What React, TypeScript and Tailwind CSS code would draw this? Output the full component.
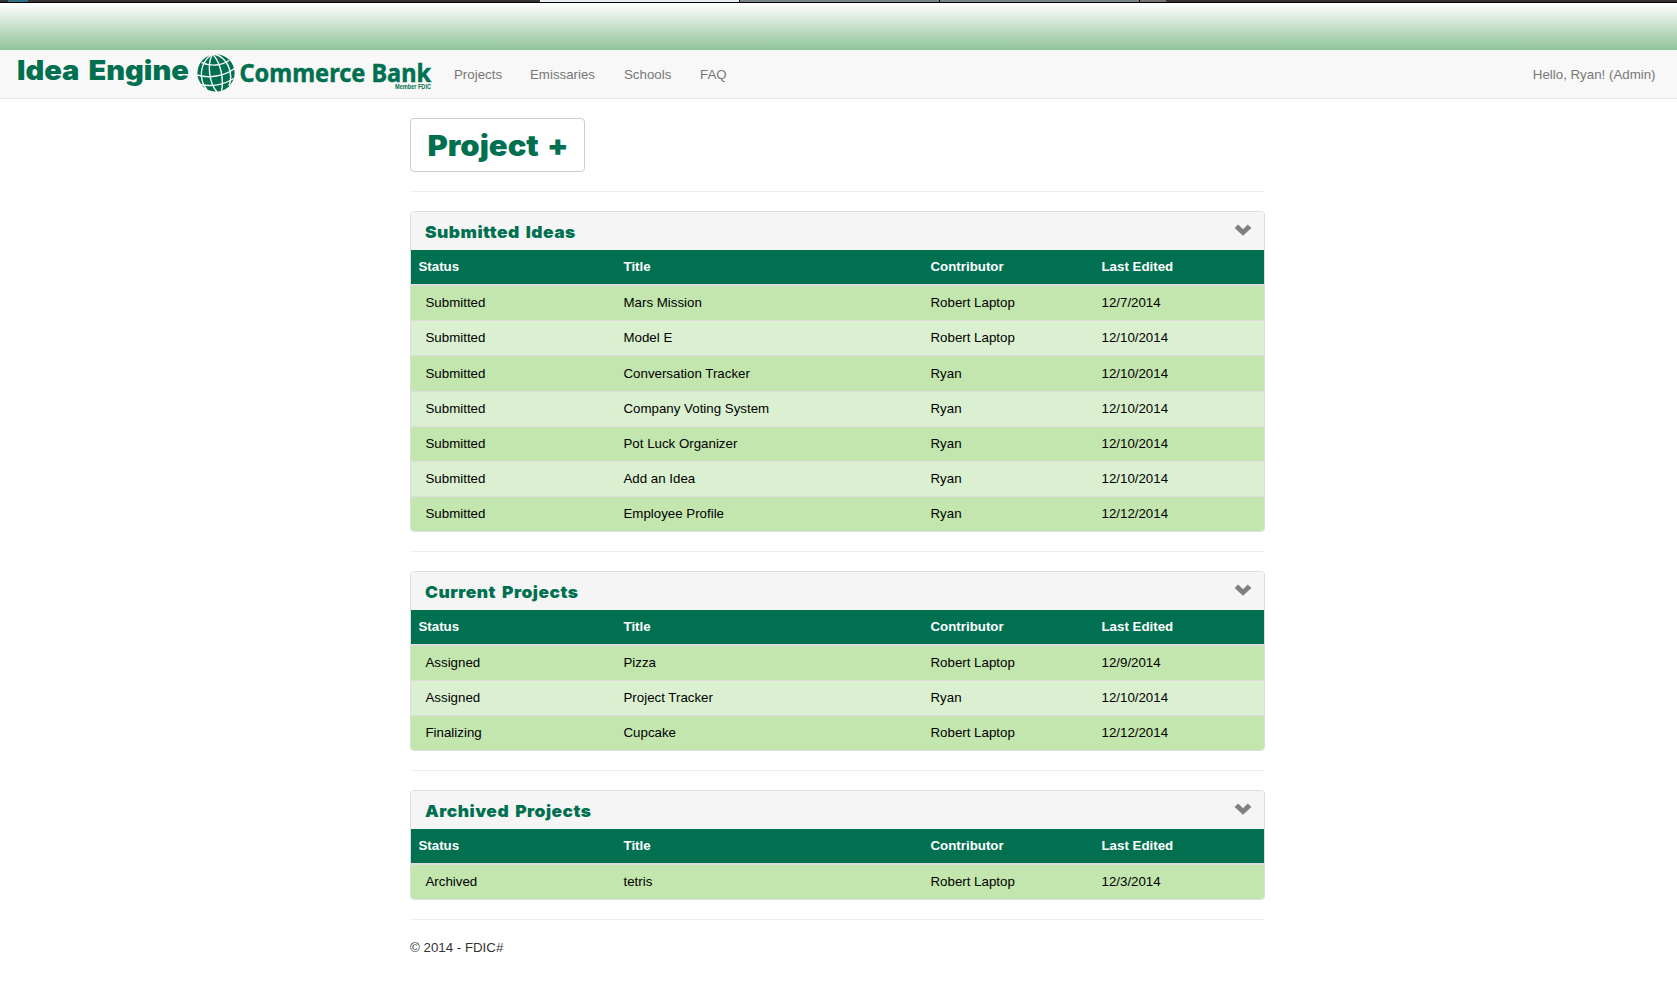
import React from "react";

type Row = [string, string, string, string];

const submitted: Row[] = [
  ["Submitted", "Mars Mission", "Robert Laptop", "12/7/2014"],
  ["Submitted", "Model E", "Robert Laptop", "12/10/2014"],
  ["Submitted", "Conversation Tracker", "Ryan", "12/10/2014"],
  ["Submitted", "Company Voting System", "Ryan", "12/10/2014"],
  ["Submitted", "Pot Luck Organizer", "Ryan", "12/10/2014"],
  ["Submitted", "Add an Idea", "Ryan", "12/10/2014"],
  ["Submitted", "Employee Profile", "Ryan", "12/12/2014"],
];
const current: Row[] = [
  ["Assigned", "Pizza", "Robert Laptop", "12/9/2014"],
  ["Assigned", "Project Tracker", "Ryan", "12/10/2014"],
  ["Finalizing", "Cupcake", "Robert Laptop", "12/12/2014"],
];
const archived: Row[] = [["Archived", "tetris", "Robert Laptop", "12/3/2014"]];

const columns = "grid grid-cols-[205px_307px_171px_1fr]";

function Chevron() {
  return (
    <svg className="mt-[12px] mr-[12.5px] h-[12px] w-[18px]" viewBox="0 0 18 12">
      <path d="M4.2 0.6 L9 5.2 L13.8 0.6 L17.4 4 L9 11.8 L0.6 4 Z" fill="#808080" />
    </svg>
  );
}

function Panel({ title, rows }: { title: string; rows: Row[] }) {
  return (
    <section className="overflow-hidden rounded border border-[#ddd]">
      <div className="flex h-[38px] justify-between bg-[#f5f5f5]">
        <h3 className="mt-[8px] ml-[14px] origin-left scale-x-[1.055] font-['Inter'] text-[16.5px] leading-[25px] font-black tracking-[0.45px] text-[#007050] [word-spacing:2px]">
          {title}
        </h3>
        <Chevron />
      </div>
      <div className={`${columns} h-[34px] bg-[#007050] text-[13.3px] leading-[33px] font-bold text-white`}>
        <span className="pl-[7.5px]">Status</span>
        <span className="pl-[7.5px]">Title</span>
        <span className="pl-[7.5px]">Contributor</span>
        <span className="pl-[7.5px]">Last Edited</span>
      </div>
      <div className="border-t border-[#ddd]">
        {rows.map((r, i) => (
          <div
            key={i}
            className={`${columns} ${
              rows.length > 3 && i === 2 ? "h-[36px] leading-[35px]" : "h-[35px] leading-[33px]"
            } border-t border-[#ddd] text-[13.3px] text-black odd:bg-[#c3e6ae] even:bg-[#daf0d0]`}
          >
            <span className="pl-[14.5px]">{r[0]}</span>
            <span className="pl-[7.5px]">{r[1]}</span>
            <span className="pl-[7.5px]">{r[2]}</span>
            <span className="pl-[7.5px]">{r[3]}</span>
          </div>
        ))}
      </div>
    </section>
  );
}

function Globe() {
  return (
    <svg className="h-[38px] w-[38px]" viewBox="0 0 38 38">
      <circle cx="19" cy="19" r="18.6" fill="#007050" />
      <g fill="none" stroke="#f8f8f8" strokeWidth="1.4">
        <path d="M15.5 0 C24 9 27 25 24.5 38" />
        <path d="M15.5 0 C10 10 12 29 20 38" />
        <path d="M14 1 C3 9 1 25 10 36" />
        <path d="M17 0 C30 3 37 18 32 32" />
        <path d="M4.5 8.5 C13 12.5 24 12 32 6.5" />
        <path d="M0 21 C12 24.5 27 22.5 37.5 14.5" />
        <path d="M3.5 30.5 C14 33 27 31 36.5 24.5" />
      </g>
    </svg>
  );
}

export default function App() {
  return (
    <div className="flex h-[985px] flex-col overflow-hidden bg-white font-['Liberation_Sans',Arial,sans-serif]">
      <div className="flex h-[2px] shrink-0 bg-[#353234]">
        <div className="w-[8px]" />
        <div className="w-[20px] bg-[#2d6f87]" />
        <div className="w-[512px]" />
        <div className="w-[199px] bg-[#e8eef0]" />
        <div className="w-[1px] bg-black" />
        <div className="w-[199px] bg-[#788487]" />
        <div className="w-[1px] bg-black" />
        <div className="w-[199px] bg-[#788487]" />
        <div className="w-[1px] bg-black" />
        <div className="w-[26px] bg-[#77716f]" />
      </div>
      <div className="h-[1px] shrink-0 bg-black" />
      <div className="h-[47px] shrink-0 bg-linear-to-b from-white to-[#8fc39a]" />
      <nav className="flex h-[49px] shrink-0 border-b border-[#e7e7e7] bg-[#f8f8f8] text-[13.3px] leading-[49px] text-[#777]">
        <div className="w-[180px] pl-[17px]">
          <div className="origin-left scale-x-[1.075] font-['Inter'] text-[27px] leading-[42px] font-black whitespace-nowrap text-[#007050] [word-spacing:3px]">
            Idea Engine
          </div>
        </div>
        <div className="flex w-[274px] pt-[4px] pl-[17px]">
          <Globe />
          <svg className="h-[42px] w-[204px] overflow-visible" viewBox="0 0 204 42">
            <text x="4.5" y="28" fontFamily="Noto Sans" fontWeight="700" fontSize="25.5" textLength="191.5" lengthAdjust="spacingAndGlyphs" fill="#007050" stroke="#007050" strokeWidth="0.5">
              Commerce Bank
            </text>
            <text x="160" y="35" fontFamily="Liberation Sans" fontWeight="700" fontSize="6.5" textLength="36" lengthAdjust="spacingAndGlyphs" fill="#007050">
              Member FDIC
            </text>
          </svg>
        </div>
        <a className="w-[76px]">Projects</a>
        <a className="w-[94px]">Emissaries</a>
        <a className="w-[76px]">Schools</a>
        <a>FAQ</a>
        <span className="mr-[21.5px] ml-auto">Hello, Ryan! (Admin)</span>
      </nav>
      <main className="ml-[410px] flex w-[855px] flex-col pt-[19px]">
        <button className="h-[54px] w-[175px] rounded border border-[#ccc] bg-white leading-[53px] whitespace-nowrap text-[#007050]">
          <span className="inline-block scale-x-[1.07] pl-px font-['Inter'] text-[29px] font-black [word-spacing:2px]">
            Project +
          </span>
        </button>
        <hr className="my-[19px] border-[#eee]" />
        <Panel title="Submitted Ideas" rows={submitted} />
        <hr className="my-[19px] border-[#eee]" />
        <Panel title="Current Projects" rows={current} />
        <hr className="my-[19px] border-[#eee]" />
        <Panel title="Archived Projects" rows={archived} />
        <hr className="mt-[19px] mb-[18px] border-[#eee]" />
        <footer className="text-[13.3px] leading-[20px] text-[#333]">© 2014 - FDIC#</footer>
      </main>
    </div>
  );
}
